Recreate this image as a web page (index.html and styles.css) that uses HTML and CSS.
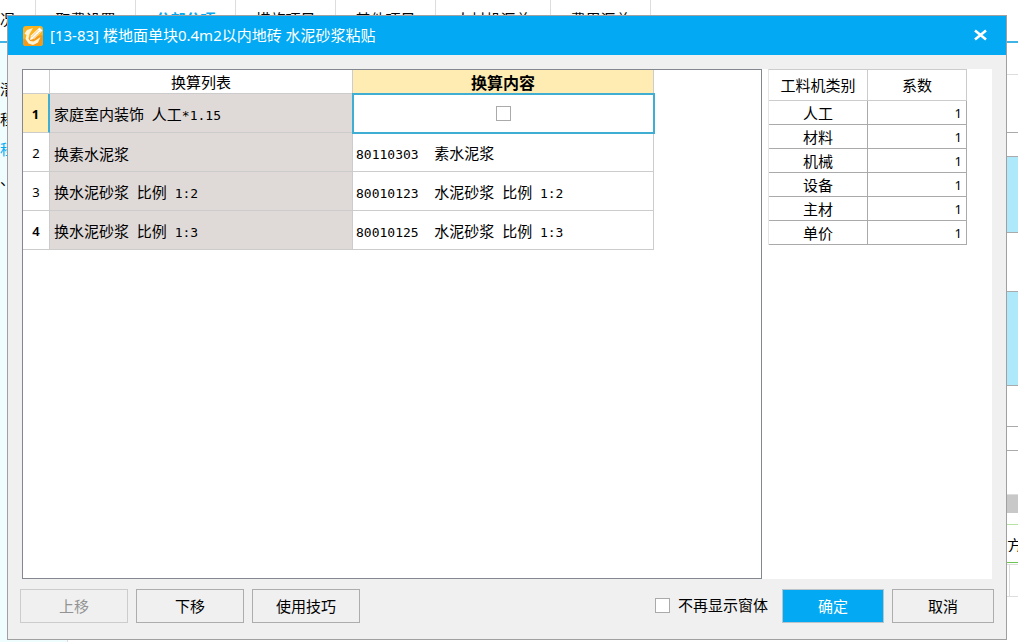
FILE: index.html
```html
<!DOCTYPE html>
<html lang="zh-CN">
<head>
<meta charset="utf-8">
<title>标准换算</title>
<link rel="stylesheet" href="styles.css">
</head>
<body>
<div class="app">
  <nav class="tabs">
    <span class="tab tab-first">况</span>
    <span class="tab">取费设置</span>
    <span class="tab tab-active">分部分项</span>
    <span class="tab">措施项目</span>
    <span class="tab">其他项目</span>
    <span class="tab tab-wide">人材机汇总</span>
    <span class="tab">费用汇总</span>
  </nav>
  <div class="workspace">
    <aside class="tree">
      <span>溍</span>
      <span>程</span>
      <span class="tree-active">程</span>
      <span>、</span>
    </aside>
    <div class="sheet">
      <div class="line h-toolbar"></div>
      <div class="line dark h-head"></div>
      <div class="line dark h-sub"></div>
      <div class="line dark lit h-band"></div>
      <div class="line dark h-group"></div>
      <div class="line dark lit h-block"></div>
      <div class="line dark h-item"></div>
      <div class="line dark h-sub"></div>
      <div class="line h-space"></div>
      <div class="scroll"></div>
      <div class="section"><span>方</span></div>
      <div class="cells"></div>
    </div>
  </div>
</div>

<section class="dialog" role="dialog" aria-labelledby="dialog-title">
  <header class="titlebar">
    <svg class="logo" viewBox="0 0 20 20" aria-hidden="true">
      <rect width="20" height="20" rx="3" fill="#fbb21f"/>
      <path d="M0 13 20 9v8a3 3 0 0 1-3 3H3a3 3 0 0 1-3-3z" fill="#f39a1b"/>
      <path d="M10 2 4 4 1.500 7.500 3.500 9 2.500 13 5.500 17.500 10 19 15 16.500 17.500 11 14 13.500 10.500 15.500 7 15 5.500 12.500 6.500 8z" fill="#fff4d8"/>
      <path d="M16.500 1.500 19.500 4.500 11.500 12.500 7 14 8 9.500z" fill="#fff"/>
      <path d="M8 11.500 15.500 4M9.500 13 17.500 5.500" stroke="#f5b748" stroke-width=".8"/>
    </svg>
    <h1 id="dialog-title">[13-83] 楼地面单块0.4m2以内地砖 水泥砂浆粘贴</h1>
    <button class="close" aria-label="关闭">
      <svg viewBox="0 0 14 12" aria-hidden="true"><path d="M1.500 1.500 12.500 10.500M12.500 1.500 1.500 10.500" stroke="#fff" stroke-width="2.600"/></svg>
    </button>
  </header>

  <div class="content">
    <div class="panel main-panel">
      <table class="convert">
        <colgroup><col class="c-no"><col class="c-list"><col class="c-value"></colgroup>
        <thead><tr><th></th><th>换算列表</th><th class="current">换算内容</th></tr></thead>
        <tbody>
          <tr class="selected"><th>1</th><td>家庭室内装饰<span class="n"> </span>人工<span class="n">*1.15</span></td><td class="focus"><input type="checkbox" aria-label="家庭室内装饰 人工*1.15"></td></tr>
          <tr><th>2</th><td>换素水泥浆</td><td><span class="n">80110303  </span>素水泥浆</td></tr>
          <tr><th>3</th><td>换水泥砂浆<span class="n"> </span>比例<span class="n"> 1:2</span></td><td><span class="n">80010123  </span>水泥砂浆<span class="n"> </span>比例<span class="n"> 1:2</span></td></tr>
          <tr><th class="strong">4</th><td>换水泥砂浆<span class="n"> </span>比例<span class="n"> 1:3</span></td><td><span class="n">80010125  </span>水泥砂浆<span class="n"> </span>比例<span class="n"> 1:3</span></td></tr>
        </tbody>
      </table>
    </div>
    <div class="panel side-panel">
      <table class="factors">
        <thead><tr><th>工料机类别</th><th>系数</th></tr></thead>
        <tbody>
          <tr><td>人工</td><td>1</td></tr>
          <tr><td>材料</td><td>1</td></tr>
          <tr><td>机械</td><td>1</td></tr>
          <tr><td>设备</td><td>1</td></tr>
          <tr><td>主材</td><td>1</td></tr>
          <tr><td>单价</td><td>1</td></tr>
        </tbody>
      </table>
    </div>
  </div>

  <footer class="actions">
    <button class="btn" disabled>上移</button>
    <button class="btn">下移</button>
    <button class="btn">使用技巧</button>
    <label class="mute"><input type="checkbox">不再显示窗体</label>
    <button class="btn btn-end primary">确定</button>
    <button class="btn btn-end">取消</button>
  </footer>
</section>
</body>
</html>
```

FILE: styles.css
```css
* { box-sizing: border-box; }

body {
  margin: 0;
  height: 100vh;
  overflow: hidden;
  position: relative;
  background: #fff;
  color: #000;
  font: 15px/20px "Noto Sans CJK SC", sans-serif;
}

button, input { font: inherit; margin: 0; }

/* Main window behind the dialog */
.app { height: 100%; display: flex; flex-direction: column; }
.tabs {
  display: flex;
  height: 43px;
  border-bottom: 2px solid #3fb4e4;
}
.tab {
  width: 100px;
  height: 40px;
  padding-top: 9px;
  border-right: 1px solid #ddd;
  text-align: center;
  white-space: nowrap;
}
.tab-first { width: 36px; text-align: left; }
.tab-wide { width: 115px; }
.tab-active { color: #03a9f2; font-weight: bold; }

.workspace { flex: 1; display: flex; min-height: 0; }
.tree {
  width: 68px;
  padding-top: 36px;
  display: flex;
  flex-direction: column;
  gap: 10px;
  background: #f0fdff;
  border-right: 1px solid #ddd;
}
.tree-active { color: #03a9f2; }

.sheet { flex: 1; display: flex; flex-direction: column; }
.line { border-bottom: 1px solid #ddd; }
.dark { border-color: #aaa; }
.lit { background: #aee8fb; }
.h-toolbar { height: 32px; }
.h-head { height: 58px; }
.h-sub { height: 24px; }
.h-band { height: 76px; }
.h-group { height: 59px; }
.h-block { height: 94px; }
.h-item { height: 41px; }
.h-space { height: 44px; }
.scroll { height: 18px; background: #c8c8c8; }
.section {
  height: 39px;
  margin-top: 11px;
  padding: 10px 0;
  display: flex;
  justify-content: flex-end;
  border-top: 1px solid #b5e3a4;
  border-bottom: 1px solid #6cc455;
}
.section span { width: 11px; overflow: hidden; }
.cells {
  height: 33px;
  margin-top: 1px;
  display: flex;
  justify-content: flex-end;
  border: 1px solid #ddd;
  border-width: 1px 0;
}
.cells::after { content: ""; width: 8px; border-left: 1px solid #ddd; }

/* Dialog */
.dialog {
  position: absolute;
  inset: 15px 11px 2px 7px;
  display: flex;
  flex-direction: column;
  background: #f0f0f0;
  border: 1px solid #a0a0a0;
}
.titlebar {
  height: 39px;
  padding: 0 18px 0 15px;
  display: flex;
  align-items: center;
  gap: 7px;
  background: #03a9f2;
  color: #fff;
}
.logo { width: 20px; height: 20px; }
.titlebar h1 {
  flex: 1;
  margin: 0;
  padding-bottom: 2px;
  font: 15px/20px "Noto Sans", "Noto Sans CJK SC", sans-serif;
}
.close {
  display: flex;
  padding: 0 0 2px;
  border: 0;
  background: none;
}
.close svg { width: 15px; height: 12px; }

.content {
  flex: 1;
  min-height: 0;
  display: flex;
  padding: 14px 14px 0;
}
.panel { background: #fff; }
.main-panel { flex: 1; border: 1px solid #828790; }
.side-panel {
  width: 230px;
  padding-left: 6px;
}

table { border-spacing: 0; table-layout: fixed; }
th, td {
  padding: 0;
  border-right: 1px solid #ccc;
  border-bottom: 1px solid #ccc;
  white-space: nowrap;
}
th { font-weight: normal; }

.convert { width: 631px; }
.c-no { width: 27px; }
.c-list { width: 303px; }
.c-value { width: 301px; }
.convert thead th { height: 24px; }
.convert .current { background: #ffecb3; font-weight: bold; font-size: 16px; }
.convert td { height: 39px; padding: 3px 0 0 4px; }
.convert td:nth-child(2) { background: #dfdad8; }
.convert td:nth-child(3) { padding-left: 3px; }
.convert tbody th { padding-top: 2px; font: 13px/20px "Noto Sans", sans-serif; }
.convert tbody .strong { font-weight: 600; }
.convert .selected th {
  background: #ffecb3;
  border-right: 2px solid #40add3;
  font-weight: bold;
}
.convert .selected .focus {
  padding: 0;
  text-align: center;
  border: 0;
  outline: 2px solid #40add3;
  outline-offset: -1px;
}
.n { font: 13px/20px "DejaVu Sans Mono", monospace; white-space: pre; }

input[type="checkbox"] {
  appearance: none;
  width: 15px;
  height: 15px;
  border: 1px solid #aaa;
  background: #fff;
  vertical-align: middle;
}
.focus input { display: block; margin: 0 auto; }

.factors { width: 199px; border-top: 1px solid #ccc; border-left: 1px solid #e5e5e5; }
.factors th { height: 31px; }
.factors td { height: 24px; line-height: 20px; text-align: center; border-color: #aaa; }
.factors td:last-child {
  padding-right: 4px;
  text-align: right;
  font: 13px/20px "Noto Sans", sans-serif;
}

.actions {
  display: flex;
  align-items: center;
  gap: 8px;
  padding: 10px 12px 16px 12px;
}
.btn {
  width: 108px;
  height: 34px;
  padding: 0 0 1px;
  border: 1px solid #adadad;
  background: #f0f0f0;
  color: #000;
}
.btn:disabled { border-color: #ccc; color: #939393; }
.btn-end { width: 102px; }
.primary { background: #03a9f2; border-color: #b9c4ca; color: #fff; }
.mute {
  display: flex;
  align-items: center;
  gap: 8px;
  margin-left: auto;
  margin-right: 6px;
  padding-bottom: 2px;
}
```
